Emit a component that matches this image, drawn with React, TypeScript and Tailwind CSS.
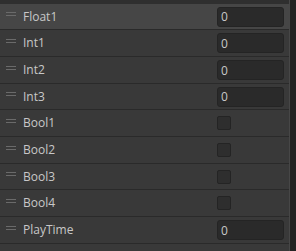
import { useState } from "react";

type Field = { name: string; kind: "num" | "bool"; value?: string };

const FIELDS: Field[] = [
  { name: "Float1", kind: "num", value: "0" },
  { name: "Int1", kind: "num", value: "0" },
  { name: "Int2", kind: "num", value: "0" },
  { name: "Int3", kind: "num", value: "0" },
  { name: "Bool1", kind: "bool" },
  { name: "Bool2", kind: "bool" },
  { name: "Bool3", kind: "bool" },
  { name: "Bool4", kind: "bool" },
  { name: "PlayTime", kind: "num", value: "0" },
];

// row heights so the pitch lands on ~26.7px like the editor
const HEIGHTS = ["h-[26px]", "h-[27px]", "h-[27px]", "h-[26px]", "h-[27px]", "h-[27px]", "h-[26px]", "h-[27px]", "h-[27px]"];

function Handle() {
  return (
    <div className="mb-[5px] flex w-[10px] flex-col gap-[2px]">
      <div className="h-px bg-[#6a6a6a]" />
      <div className="h-px bg-[#6a6a6a]" />
    </div>
  );
}

export default function App() {
  const [vals, setVals] = useState<Record<string, string>>(
    Object.fromEntries(FIELDS.filter((f) => f.kind === "num").map((f) => [f.name, f.value ?? "0"]))
  );
  const [checks, setChecks] = useState<Record<string, boolean>>({});

  return (
    <div
      className="flex h-[251px] w-[296px] bg-[#383838] text-[12px] text-[#c8c8c8]"
      style={{ fontFamily: '"Open Sans", "Noto Sans", sans-serif' }}
    >
      <div className="flex flex-1 flex-col border-r border-[#474747]">
        <div className="h-[4px] bg-[#2f2f2f]" />
        {FIELDS.map((f, i) => (
          <div
            key={f.name}
            className={`flex shrink-0 items-center border-b border-[#2a2a2a] pl-[6px] pr-[5px] ${HEIGHTS[i]} ${
              i === 0 ? "bg-[#464646]" : "bg-[#393939]"
            }`}
          >
            <Handle />
            <span className="ml-[7px] flex-1 leading-none">{f.name}</span>
            <div className="flex w-[67px] items-center">
              {f.kind === "num" ? (
                <input
                  value={vals[f.name]}
                  onChange={(e) => setVals((p) => ({ ...p, [f.name]: e.target.value }))}
                  className="h-[20px] w-[67px] rounded-[3px] border border-[#242424] bg-[#2a2a2a] px-[3px] text-[12px] text-[#c8c8c8] outline-none"
                />
              ) : (
                <button
                  onClick={() => setChecks((p) => ({ ...p, [f.name]: !p[f.name] }))}
                  className="h-[14px] w-[14px] rounded-[2px] border border-[#242424] bg-[#2e2e2e]"
                >
                  {checks[f.name] ? "✓" : null}
                </button>
              )}
            </div>
          </div>
        ))}
        <div className="flex-1 bg-[#393939]" />
      </div>
      <div className="w-[6px] bg-[#232323]" />
    </div>
  );
}
